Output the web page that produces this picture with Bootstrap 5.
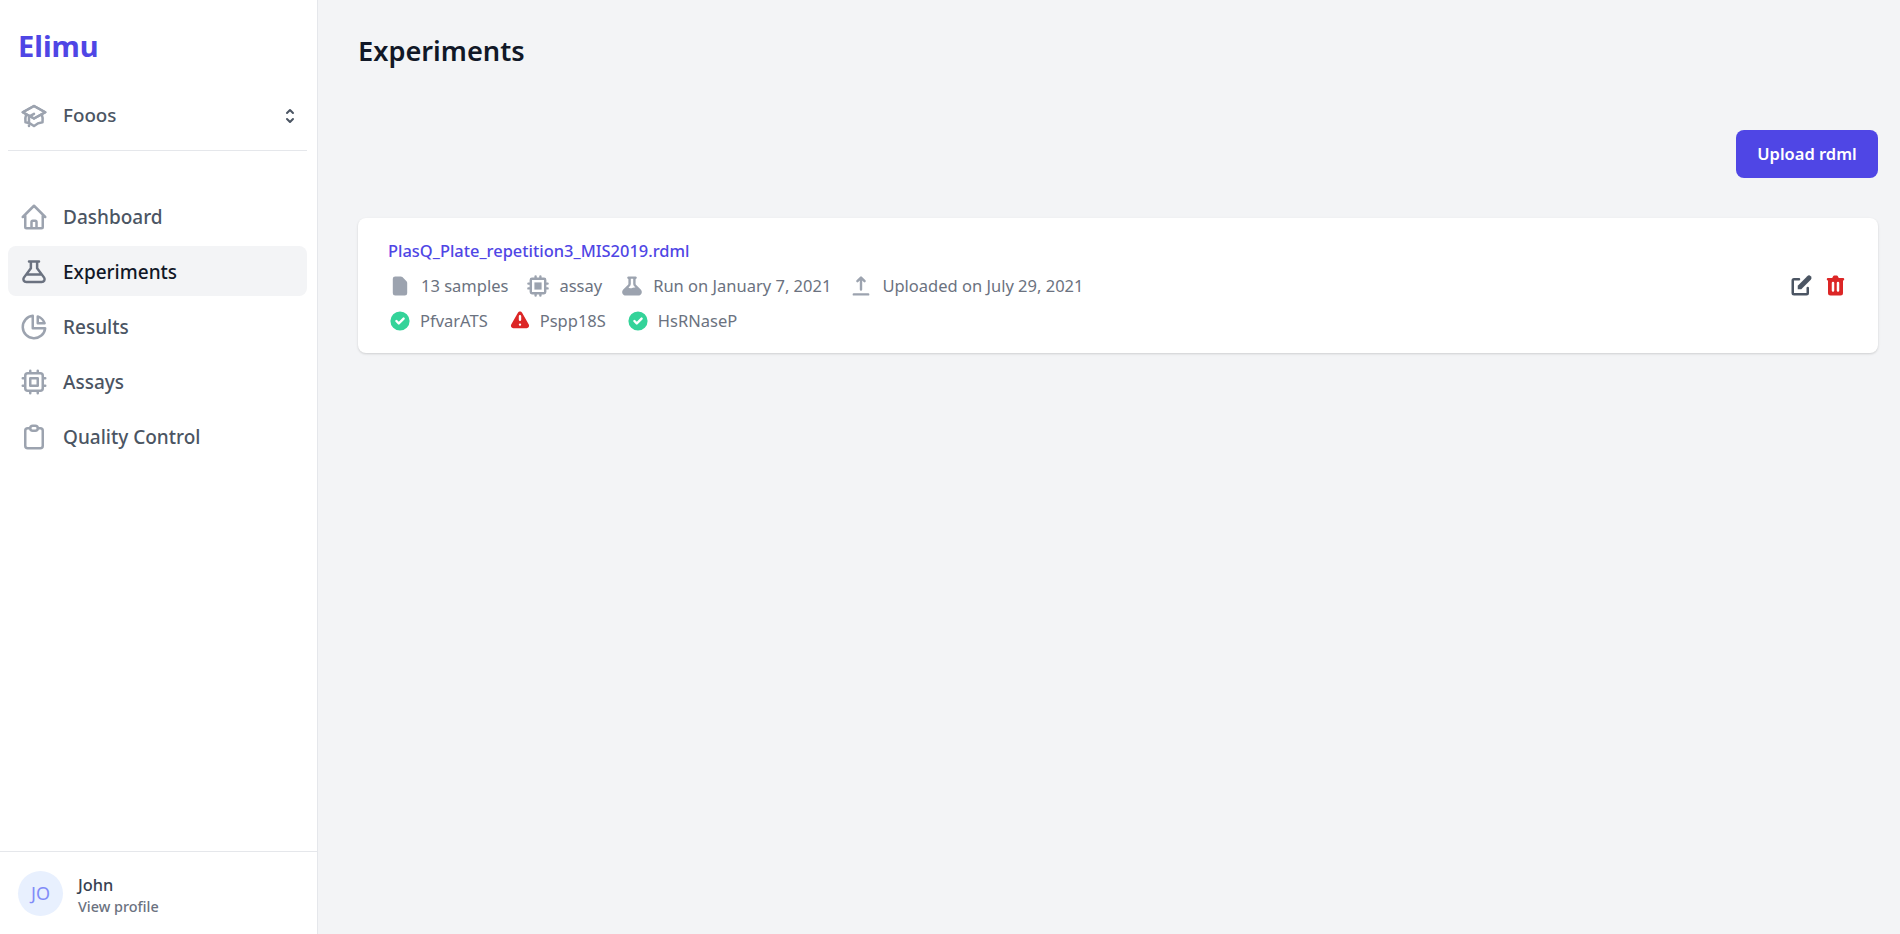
<!DOCTYPE html>
<html lang="en">
<head>
<meta charset="utf-8">
<title>Elimu</title>
<link href="https://cdn.jsdelivr.net/npm/bootstrap@5.3.0/dist/css/bootstrap.min.css" rel="stylesheet">
<style>
html,body{height:100%}
body{font-family:"Noto Sans","Liberation Sans",sans-serif;background:#f3f4f6;color:#111827;overflow:hidden}
.app-shell{height:934px}
.side-pane{width:318px;flex:none;background:#fff;border-right:1px solid #e5e7eb}
.brand-name{font-size:29px;line-height:36px;font-weight:700;color:#4f46e5;margin:28px 0 0 18px}
.org-row{margin:26px 10px 0 8px;padding:0 10.5px 9px;border-bottom:1px solid #e5e7eb;height:61px;color:#4b5563;font-size:18.8px;font-weight:500}
.org-row svg.cap{width:30px;height:30px;color:#9ca3af;margin-right:14.5px;flex:none}
.org-row svg.sel{width:20px;height:20px;color:#4b5563;margin-left:auto;margin-right:-3px;flex:none}
.side-nav{margin:40px 10px 0 8px}
.side-link{height:50px;padding:2px 10.5px 0;margin-bottom:5px;border-radius:8px;color:#4b5563;font-size:19px;font-weight:500;text-decoration:none}
.side-link svg{width:30px;height:30px;color:#9ca3af;margin-right:14.5px;flex:none}
.side-link.current{background:#f3f4f6;color:#111827}
.side-link.current svg{color:#6b7280}
.side-foot{border-top:1px solid #e5e7eb;height:83px;padding:0 18px}
.avatar-disc{width:45px;height:45px;border-radius:50%;background:#e8f0fe;color:#818cf8;font-size:18px;margin-right:15px}
.user-name{font-size:16.4px;line-height:24px;font-weight:500;color:#374151;padding-top:4px}
.user-sub{font-size:14.4px;line-height:20px;font-weight:500;color:#6b7280}
.main-pane{padding:0 22px 0 40px;min-width:0}
.page-title{font-size:27.2px;line-height:36px;font-weight:600;color:#111827;margin:33px 0 0 0}
.upload-btn{background:#4f46e5;border:0;color:#fff;font-size:16.5px;font-weight:600;width:142px;height:48px;border-radius:8px;padding:0}
.upload-btn:hover{background:#4338ca;color:#fff}
.btn-line{margin-top:61px}
.exp-card{margin:40px 0 0 0;height:135px;background:#fff;border-radius:8px;box-shadow:0 1px 3px rgba(0,0,0,.1),0 1px 2px rgba(0,0,0,.06);padding:0 30px 0 30px}
.exp-link{font-size:16.45px;line-height:24px;font-weight:500;color:#4f46e5;text-decoration:none}
.meta-row{font-size:16.5px;line-height:24px;color:#6b7280;margin-top:11px}
.meta-item{margin-right:18px}
.meta-item svg{width:24px;height:24px;color:#9ca3af;margin-right:9px;flex:none}
.tag-item{margin-right:20px}
.tag-item svg{width:24px;height:24px;margin-right:8px;flex:none}
.ok-ico{color:#34d399}
.bad-ico{color:#dc2626}
.act-ico{width:25px;height:25px}
.act-edit{color:#4b5563}
.act-del{color:#dc2626;margin-left:9px}
</style>
</head>
<body>
<div class="app-shell d-flex">
  <aside class="side-pane d-flex flex-column">
    <div class="brand-name">Elimu</div>
    <div class="org-row d-flex align-items-center">
      <svg class="cap" viewBox="0 0 24 24" fill="none" stroke="currentColor" stroke-width="2" stroke-linecap="round" stroke-linejoin="round"><path d="M12 14l9-5-9-5-9 5 9 5z"/><path d="M12 14l9-5-9-5-9 5 9 5zm0 0l6.16-3.422a12.083 12.083 0 01.665 6.479A11.952 11.952 0 0012 20.055a11.952 11.952 0 00-6.824-2.998 12.078 12.078 0 01.665-6.479L12 14zm-4 6v-7.5l4-2.222"/></svg>
      <span>Fooos</span>
      <svg class="sel" viewBox="0 0 20 20" fill="currentColor"><path fill-rule="evenodd" clip-rule="evenodd" d="M10 3a1 1 0 01.707.293l3 3a1 1 0 01-1.414 1.414L10 5.414 7.707 7.707a1 1 0 01-1.414-1.414l3-3A1 1 0 0110 3zm-3.707 9.293a1 1 0 011.414 0L10 14.586l2.293-2.293a1 1 0 011.414 1.414l-3 3a1 1 0 01-1.414 0l-3-3a1 1 0 010-1.414z"/></svg>
    </div>
    <nav class="side-nav flex-grow-1">
      <a href="#" class="side-link d-flex align-items-center"><svg viewBox="0 0 24 24" fill="none" stroke="currentColor" stroke-width="2" stroke-linecap="round" stroke-linejoin="round"><path d="M3 12l2-2m0 0l7-7 7 7M5 10v10a1 1 0 001 1h3m10-11l2 2m-2-2v10a1 1 0 01-1 1h-3m-6 0a1 1 0 001-1v-4a1 1 0 011-1h2a1 1 0 011 1v4a1 1 0 001 1m-6 0h6"/></svg>Dashboard</a>
      <a href="#" class="side-link current d-flex align-items-center"><svg viewBox="0 0 24 24" fill="none" stroke="currentColor" stroke-width="2" stroke-linecap="round" stroke-linejoin="round"><path d="M8 3.500h8M9.500 3.500v5.500L3.900 16.500c-1 1.600 0 3.500 2 3.500h12.200c2 0 3-1.900 2-3.500L14.500 9V3.500M6.500 14h11"/></svg>Experiments</a>
      <a href="#" class="side-link d-flex align-items-center"><svg viewBox="0 0 24 24" fill="none" stroke="currentColor" stroke-width="2" stroke-linecap="round" stroke-linejoin="round"><path d="M11 3.055A9.001 9.001 0 1020.945 13H11V3.055z"/><path d="M20.488 9H15V3.512A9.025 9.025 0 0120.488 9z"/></svg>Results</a>
      <a href="#" class="side-link d-flex align-items-center"><svg viewBox="0 0 24 24" fill="none" stroke="currentColor" stroke-width="2" stroke-linecap="round" stroke-linejoin="round"><path d="M9 3v2m6-2v2M9 19v2m6-2v2M5 9H3m2 6H3m18-6h-2m2 6h-2M7 19h10a2 2 0 002-2V7a2 2 0 00-2-2H7a2 2 0 00-2 2v10a2 2 0 002 2zM9 9h6v6H9V9z"/></svg>Assays</a>
      <a href="#" class="side-link d-flex align-items-center"><svg viewBox="0 0 24 24" fill="none" stroke="currentColor" stroke-width="2" stroke-linecap="round" stroke-linejoin="round"><path d="M9 5H7a2 2 0 00-2 2v12a2 2 0 002 2h10a2 2 0 002-2V7a2 2 0 00-2-2h-2M9 5a2 2 0 002 2h2a2 2 0 002-2M9 5a2 2 0 012-2h2a2 2 0 012 2"/></svg>Quality Control</a>
    </nav>
    <div class="side-foot d-flex align-items-center">
      <div class="avatar-disc d-flex align-items-center justify-content-center">JO</div>
      <div>
        <div class="user-name">John</div>
        <div class="user-sub">View profile</div>
      </div>
    </div>
  </aside>
  <main class="main-pane flex-grow-1">
    <h1 class="page-title">Experiments</h1>
    <div class="btn-line d-flex justify-content-end">
      <button type="button" class="btn upload-btn">Upload rdml</button>
    </div>
    <div class="exp-card d-flex align-items-center justify-content-between">
      <div>
        <a href="#" class="exp-link d-block">PlasQ_Plate_repetition3_MIS2019.rdml</a>
        <div class="meta-row d-flex align-items-center">
          <span class="meta-item d-flex align-items-center"><svg viewBox="0 0 20 20" fill="currentColor"><path d="M4 4a2 2 0 012-2h4.586A2 2 0 0112 2.586L15.414 6A2 2 0 0116 7.414V16a2 2 0 01-2 2H6a2 2 0 01-2-2V4z"/></svg>13 samples</span>
          <span class="meta-item d-flex align-items-center"><svg viewBox="0 0 20 20" fill="currentColor"><path d="M13 7H7v6h6V7z"/><path fill-rule="evenodd" clip-rule="evenodd" d="M7 2a1 1 0 012 0v1h2V2a1 1 0 112 0v1h2a2 2 0 012 2v2h1a1 1 0 110 2h-1v2h1a1 1 0 110 2h-1v2a2 2 0 01-2 2h-2v1a1 1 0 11-2 0v-1H9v1a1 1 0 11-2 0v-1H5a2 2 0 01-2-2v-2H2a1 1 0 110-2h1V9H2a1 1 0 010-2h1V5a2 2 0 012-2h2V2zM5 5h10v10H5V5z"/></svg>assay</span>
          <span class="meta-item d-flex align-items-center"><svg viewBox="0 0 20 20" fill="currentColor"><path fill-rule="evenodd" clip-rule="evenodd" d="M7 2a1 1 0 00-.707 1.707L7 4.414v3.758a1 1 0 01-.293.707l-4 4C.817 14.769 2.156 18 4.828 18h10.343c2.673 0 4.012-3.231 2.122-5.121l-4-4A1 1 0 0113 8.172V4.414l.707-.707A1 1 0 0013 2H7zm2 6.172V4h2v4.172a3 3 0 00.879 2.12l1.027 1.028a4 4 0 00-2.171.102l-.47.156a4 4 0 01-2.53 0l-.563-.187a1.993 1.993 0 00-.114-.035l1.063-1.063A3 3 0 009 8.172z"/></svg>Run on January 7, 2021</span>
          <span class="meta-item d-flex align-items-center"><svg viewBox="0 0 20 20" fill="currentColor"><path fill-rule="evenodd" clip-rule="evenodd" d="M3 17a1 1 0 011-1h12a1 1 0 110 2H4a1 1 0 01-1-1zM6.293 6.707a1 1 0 010-1.414l3-3a1 1 0 011.414 0l3 3a1 1 0 01-1.414 1.414L11 5.414V13a1 1 0 11-2 0V5.414L7.707 6.707a1 1 0 01-1.414 0z"/></svg>Uploaded on July 29, 2021</span>
        </div>
        <div class="meta-row d-flex align-items-center">
          <span class="tag-item d-flex align-items-center"><svg class="ok-ico" viewBox="0 0 20 20" fill="currentColor"><path fill-rule="evenodd" clip-rule="evenodd" d="M10 18a8 8 0 100-16 8 8 0 000 16zm3.707-9.293a1 1 0 00-1.414-1.414L9 10.586 7.707 9.293a1 1 0 00-1.414 1.414l2 2a1 1 0 001.414 0l4-4z"/></svg>PfvarATS</span>
          <span class="tag-item d-flex align-items-center"><svg class="bad-ico" viewBox="0 0 20 20" fill="currentColor"><path fill-rule="evenodd" clip-rule="evenodd" d="M8.257 3.099c.765-1.36 2.722-1.36 3.486 0l5.58 9.92c.75 1.334-.213 2.98-1.742 2.98H4.42c-1.53 0-2.493-1.646-1.743-2.98l5.58-9.92zM11 13a1 1 0 11-2 0 1 1 0 012 0zm-1-8a1 1 0 00-1 1v3a1 1 0 002 0V6a1 1 0 00-1-1z"/></svg>Pspp18S</span>
          <span class="tag-item d-flex align-items-center"><svg class="ok-ico" viewBox="0 0 20 20" fill="currentColor"><path fill-rule="evenodd" clip-rule="evenodd" d="M10 18a8 8 0 100-16 8 8 0 000 16zm3.707-9.293a1 1 0 00-1.414-1.414L9 10.586 7.707 9.293a1 1 0 00-1.414 1.414l2 2a1 1 0 001.414 0l4-4z"/></svg>HsRNaseP</span>
        </div>
      </div>
      <div class="d-flex align-items-center">
        <svg class="act-ico act-edit" viewBox="0 0 20 20" fill="currentColor"><path d="M17.414 2.586a2 2 0 00-2.828 0L7 10.172V13h2.828l7.586-7.586a2 2 0 000-2.828z"/><path fill-rule="evenodd" clip-rule="evenodd" d="M2 6a2 2 0 012-2h4a1 1 0 010 2H4v10h10v-4a1 1 0 112 0v4a2 2 0 01-2 2H4a2 2 0 01-2-2V6z"/></svg>
        <svg class="act-ico act-del" viewBox="0 0 20 20" fill="currentColor"><path fill-rule="evenodd" clip-rule="evenodd" d="M9 2a1 1 0 00-.894.553L7.382 4H4a1 1 0 000 2v10a2 2 0 002 2h8a2 2 0 002-2V6a1 1 0 100-2h-3.382l-.724-1.447A1 1 0 0011 2H9zM7 8a1 1 0 012 0v6a1 1 0 11-2 0V8zm5-1a1 1 0 00-1 1v6a1 1 0 102 0V8a1 1 0 00-1-1z"/></svg>
      </div>
    </div>
  </main>
</div>
<script src="https://cdn.jsdelivr.net/npm/bootstrap@5.3.0/dist/js/bootstrap.bundle.min.js"></script>
</body>
</html>
